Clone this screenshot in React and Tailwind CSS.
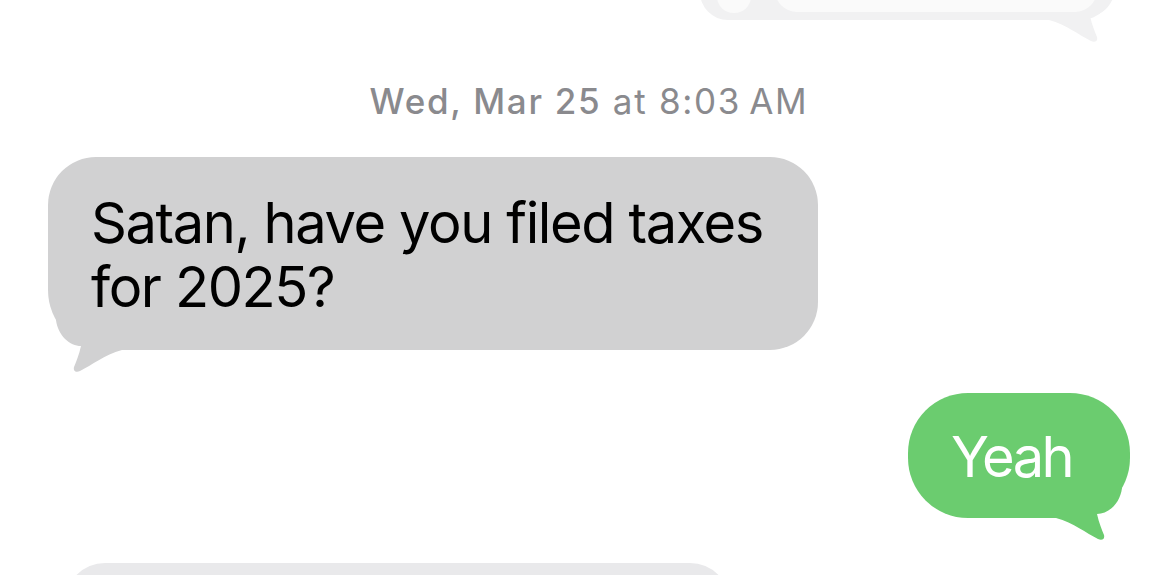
import React from "react";

const TAIL =
  "M 8 20 C 10 36, 22 46, 33 46 C 31 55, 28 62, 26 67 C 25 71, 28 73, 32 71 C 44 65, 56 55, 74 50 L 74 20 Z";

function TailLeft({ color, className }) {
  return (
    <svg className={className} width="80" height="75" viewBox="0 0 80 75" fill="none">
      <path d={TAIL} fill={color} />
    </svg>
  );
}

function TailRight({ color, className }) {
  return (
    <svg className={className} width="80" height="75" viewBox="0 0 80 75" fill="none">
      <g transform="translate(80 0) scale(-1 1)">
        <path d={TAIL} fill={color} />
      </g>
    </svg>
  );
}

export default function App() {
  return (
    <div
      className="w-[1161px] h-[575px] overflow-hidden bg-white flex flex-col"
      style={{ fontFamily: "Inter, 'Liberation Sans', Arial, sans-serif" }}
    >
      {/* faded bubble at top */}
      <div className="flex justify-end pr-[48px] h-[20px] shrink-0">
        <div className="relative w-[413px] h-[60px] -mt-[40px] rounded-[40px] rounded-br-[46px] bg-[#f1f1f2] flex items-end gap-[24px] pl-[17px] pr-[16px] pb-[12px]">
          <TailRight color="#f1f1f2" className="absolute right-[-10px] bottom-[-25px]" />
          <div className="relative w-[34px] h-[33px] rounded-full bg-[#fafafa] shrink-0 -mb-[5px]" />
          <div className="relative flex-1 h-[48px] rounded-b-[22px] bg-[#fafafa] -mb-[4px]" />
        </div>
      </div>

      {/* timestamp */}
      <div className="mt-[60px] pl-[17px] text-center text-[35px] leading-[42px] text-[#8a8a8e] tracking-[1.7px]">
        <span className="font-medium">Wed, Mar 25</span>
        <span> at 8:03&#8201;AM</span>
      </div>

      {/* received bubble */}
      <div className="mt-[35px] pl-[48px] flex">
        <div className="relative w-[770px] h-[193px] rounded-[48px] rounded-bl-[60px] bg-[#d1d1d2] pt-[34px] pl-[43px] text-[56px] leading-[64px] text-black tracking-[-1.4px]">
          <TailLeft color="#d1d1d2" className="absolute left-0 bottom-[-25px]" />
          <p className="relative">
            Satan, have you filed taxes
            <br />
            for 2025?
          </p>
        </div>
      </div>

      {/* sent bubble */}
      <div className="mt-[43px] flex justify-end pr-[31px]">
        <div className="relative w-[222px] h-[125px] rounded-[60px] bg-[#6bcc6f] pt-[32px] pl-[43px] text-[56px] leading-[64px] text-white tracking-[-2.6px]">
          <TailRight color="#6bcc6f" className="absolute right-0 bottom-[-25px]" />
          <p className="relative">Yeah</p>
        </div>
      </div>

      {/* next bubble peeking */}
      <div className="mt-[45px] pl-[65px] flex">
        <div className="w-[665px] h-[40px] rounded-t-[40px] bg-[#e9e9eb]" />
      </div>
    </div>
  );
}
